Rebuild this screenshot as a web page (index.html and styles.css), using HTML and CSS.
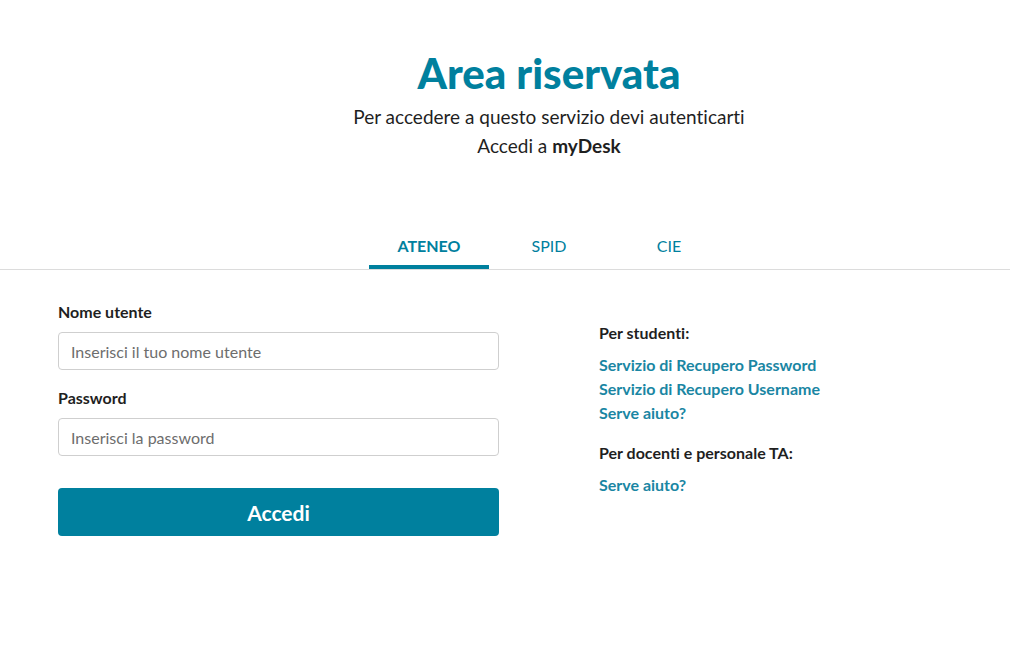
FILE: index.html
```html
<!DOCTYPE html>
<html lang="it">
<head>
    <meta charset="UTF-8">
    <meta name="viewport" content="width=device-width, initial-scale=1.0">
    <title>Area riservata</title>
    <link rel="stylesheet" href="styles.css">
</head>
<body>
    <div class="header">
        <h1>Area riservata</h1>
        <p>Per accedere a questo servizio devi autenticarti</p>
        <p>Accedi a <strong>myDesk</strong></p>
    </div>

    <div class="tabs">
        <div class="tab-list">
            <a class="tab active" href="#">ATENEO</a>
            <a class="tab" href="#">SPID</a>
            <a class="tab" href="#">CIE</a>
        </div>
    </div>

    <div class="content">
        <form class="login-form" onsubmit="return false">
            <label for="username">Nome utente</label>
            <input type="text" id="username" placeholder="Inserisci il tuo nome utente">
            <label for="password">Password</label>
            <input type="password" id="password" placeholder="Inserisci la password">
            <button type="submit">Accedi</button>
        </form>

        <div class="help">
            <h3>Per studenti:</h3>
            <a href="#">Servizio di Recupero Password</a>
            <a href="#">Servizio di Recupero Username</a>
            <a href="#">Serve aiuto?</a>
            <h3 class="staff">Per docenti e personale TA:</h3>
            <a href="#">Serve aiuto?</a>
        </div>
    </div>
</body>
</html>
```

FILE: styles.css
```css
body {
    margin: 0;
    font-family: Lato, "Open Sans", sans-serif;
    font-variant-ligatures: none;
    color: #1f1f1f;
    background-color: #fff;
}
.header {
    padding: 48px 0 0 88px;
    text-align: center;
}
.header h1 {
    margin: 0 0 4px;
    font-size: 42px;
    font-weight: 900;
    line-height: 50px;
    color: #00809e;
}
.header p {
    margin: 0;
    font-size: 19px;
    line-height: 29px;
}
.tabs {
    margin-top: 67px;
    padding-left: 88px;
    border-bottom: 1px solid #dcdcdc;
}
.tab-list {
    display: flex;
    justify-content: center;
}
.tab {
    width: 120px;
    padding: 9px 0 10px;
    text-align: center;
    font-size: 16px;
    line-height: 19px;
    color: #00809e;
    text-decoration: none;
    border-bottom: 4px solid transparent;
}
.tab.active {
    font-weight: 700;
    border-bottom-color: #00809e;
}
.content {
    display: flex;
    gap: 100px;
    padding: 32px 0 0 58px;
}
.login-form {
    display: flex;
    flex-direction: column;
    width: 441px;
}
.login-form label {
    font-size: 16px;
    font-weight: 700;
    line-height: 20px;
    margin-bottom: 10px;
}
.login-form input {
    height: 38px;
    box-sizing: border-box;
    padding: 0 12px;
    border: 1px solid #cfcfcf;
    border-radius: 4px;
    font-family: inherit;
    font-size: 16px;
    color: #333;
    margin-bottom: 18px;
}
.login-form input::placeholder {
    color: #6d6d6d;
}
button {
    margin-top: 14px;
    height: 48px;
    border: none;
    border-radius: 4px;
    background-color: #00809e;
    color: #fff;
    font-family: inherit;
    font-size: 21px;
    font-weight: 700;
    cursor: pointer;
}
.help {
    display: flex;
    flex-direction: column;
    padding-top: 19px;
}
.help h3 {
    margin: 0 0 8px;
    font-size: 16px;
    font-weight: 700;
    line-height: 24px;
}
.help h3.staff {
    margin-top: 16px;
}
.help a {
    font-size: 16px;
    font-weight: 700;
    line-height: 24px;
    color: #1a86a3;
    text-decoration: none;
}
```
